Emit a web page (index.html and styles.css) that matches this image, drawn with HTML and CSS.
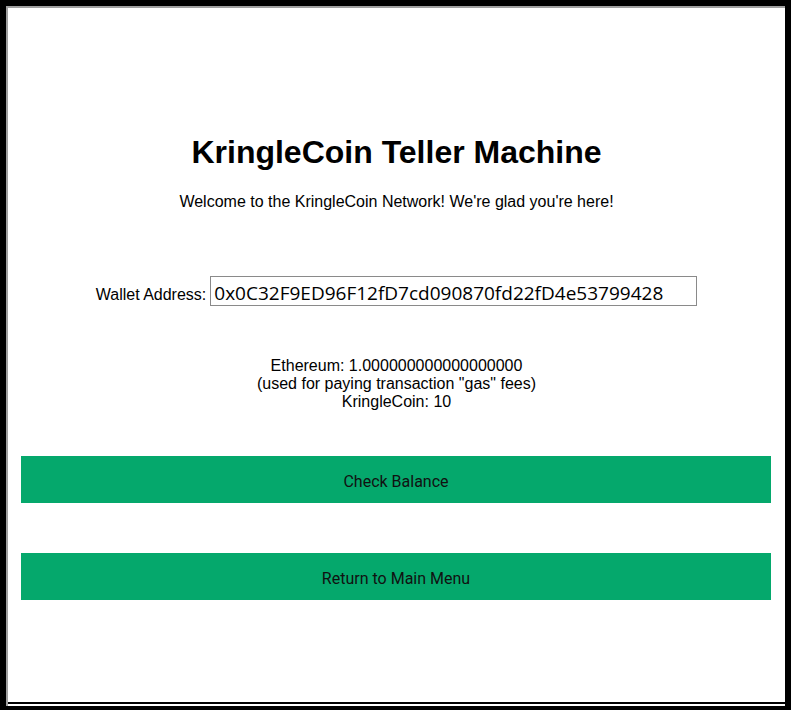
FILE: index.html
```html
<!DOCTYPE html>
<html lang="en">
<head>
<meta charset="utf-8">
<title>KringleCoin Teller Machine</title>
<link rel="stylesheet" href="styles.css">
</head>
<body>
<div class="frame">
  <div class="page">
    <h1 class="title">KringleCoin Teller Machine</h1>
    <p class="welcome">Welcome to the KringleCoin Network! We're glad you're here!</p>
    <div class="wallet-row">
      <label class="wallet-label" for="wallet">Wallet Address:</label>
      <input class="wallet-input" id="wallet" type="text" value="0x0C32F9ED96F12fD7cd090870fd22fD4e53799428">
    </div>
    <div class="balances">
      <div>Ethereum: 1.000000000000000000</div>
      <div>(used for paying transaction "gas" fees)</div>
      <div>KringleCoin: 10</div>
    </div>
    <button class="action action-first" type="button">Check Balance</button>
    <button class="action action-second" type="button">Return to Main Menu</button>
  </div>
</div>
</body>
</html>
```

FILE: styles.css
```css
html, body {
  margin: 0;
  padding: 0;
  background: #000;
}

body {
  width: 791px;
  height: 710px;
  padding: 6px 6px 4px 6px;
  box-sizing: border-box;
  font-family: "Liberation Sans", Arial, sans-serif;
  color: #000;
}

.frame {
  height: 700px;
  box-sizing: border-box;
  background: #fff;
  border-top: 2px solid #a0a0a0;
  border-left: 2px solid #a0a0a0;
  display: flex;
  flex-direction: column;
  padding-bottom: 2px;
}

.page {
  flex: 1;
  border-bottom: 2px solid #000;
  display: flex;
  flex-direction: column;
  align-items: center;
  padding-top: 126px;
}

.title {
  margin: 0;
  font-size: 32px;
  line-height: 37px;
  font-weight: bold;
  text-align: center;
}

.welcome {
  margin: 22px 0 0 0;
  font-size: 16px;
  line-height: 18px;
  text-align: center;
}

.wallet-row {
  margin-top: 65px;
  display: flex;
  align-items: baseline;
  justify-content: center;
  gap: 4px;
  font-size: 16px;
}

.wallet-input {
  width: 487px;
  height: 30px;
  box-sizing: border-box;
  border: 1px solid #8a8a8a;
  border-radius: 0;
  padding: 3px 3px 0 3px;
  font-family: "Open Sans", sans-serif;
  font-size: 19px;
  color: #000;
  background: #fff;
  outline: none;
}

.balances {
  margin-top: 51px;
  font-size: 16px;
  line-height: 18px;
  text-align: center;
}

.action {
  display: block;
  align-self: flex-start;
  margin-left: 13px;
  width: 750px;
  height: 47px;
  border: none;
  background: #05a86c;
  color: #111;
  font-family: Roboto, "Open Sans", sans-serif;
  font-size: 16px;
  padding: 4px 0 0 0;
  cursor: pointer;
}

.action-first {
  margin-top: 45px;
}

.action-second {
  margin-top: 50px;
}
```
